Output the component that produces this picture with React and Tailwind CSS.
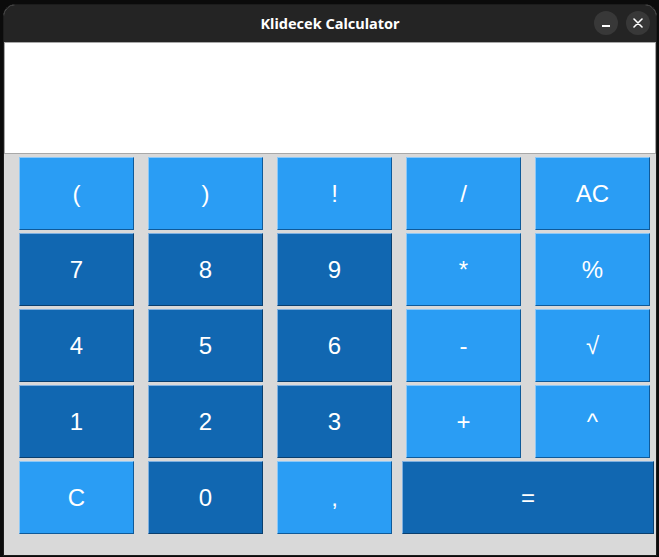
import React from "react";

const keys = [
  ["(", "light"], [")", "light"], ["!", "light"], ["/", "light"], ["AC", "light"],
  ["7", "dark"], ["8", "dark"], ["9", "dark"], ["*", "light"], ["%", "light"],
  ["4", "dark"], ["5", "dark"], ["6", "dark"], ["-", "light"], ["√", "light"],
  ["1", "dark"], ["2", "dark"], ["3", "dark"], ["+", "light"], ["^", "light"],
  ["C", "light"], ["0", "dark"], [",", "light"],
];

function Key({ label, tone, wide }) {
  const color =
    tone === "light"
      ? "bg-[#2a9df4] border-t-[#8cc8f7] border-l-[#8cc8f7] border-b-[#0f5a99] border-r-[#0f5a99]"
      : "bg-[#1167b1] border-t-[#7fb0e0] border-l-[#7fb0e0] border-b-[#0a3f6e] border-r-[#0a3f6e]";
  return (
    <button
      className={`h-[73px] flex items-center justify-center border text-white text-[24px] ${color} ${
        wide ? "col-span-2 -mx-[4px]" : ""
      }`}
      style={{ fontFamily: '"Liberation Sans", Arial, sans-serif' }}
    >
      {label}
    </button>
  );
}

export default function App() {
  return (
    <div className="w-[659px] h-[557px] bg-[#0b0b0b] pt-[4px] pl-[3px] pr-[2px] pb-[1px]">
      <div className="h-full flex flex-col rounded-t-[12px] overflow-hidden border border-[#1c1c1c] bg-[#d9d9d9]">
        <div className="h-[37px] shrink-0 bg-[#242424] flex items-center justify-center relative">
          <span
            className="text-white font-bold text-[14.5px]"
            style={{ fontFamily: '"Noto Sans", "DejaVu Sans", sans-serif' }}
          >
            Klidecek Calculator
          </span>
          <div className="absolute right-[6px] top-[6px] flex gap-[8px]">
            <div className="w-[24px] h-[24px] rounded-full bg-[#383838] flex items-center justify-center">
              <div className="w-[8px] h-[2px] bg-white mt-[6px]" />
            </div>
            <div className="w-[24px] h-[24px] rounded-full bg-[#383838] flex items-center justify-center">
              <svg width="10" height="10" viewBox="0 0 10 10">
                <path d="M1 1L9 9M9 1L1 9" stroke="white" strokeWidth="1.6" strokeLinecap="round" />
              </svg>
            </div>
          </div>
        </div>
        <div className="h-[112px] shrink-0 bg-white border border-[#a8a8a8]" />
        <div className="grid grid-cols-5 gap-x-[14px] gap-y-[3px] pl-[15px] pr-[6px] pt-[3px]">
          {keys.map(([l, t]) => (
            <Key key={l} label={l} tone={t} />
          ))}
          <Key label="=" tone="dark" wide />
        </div>
      </div>
    </div>
  );
}
